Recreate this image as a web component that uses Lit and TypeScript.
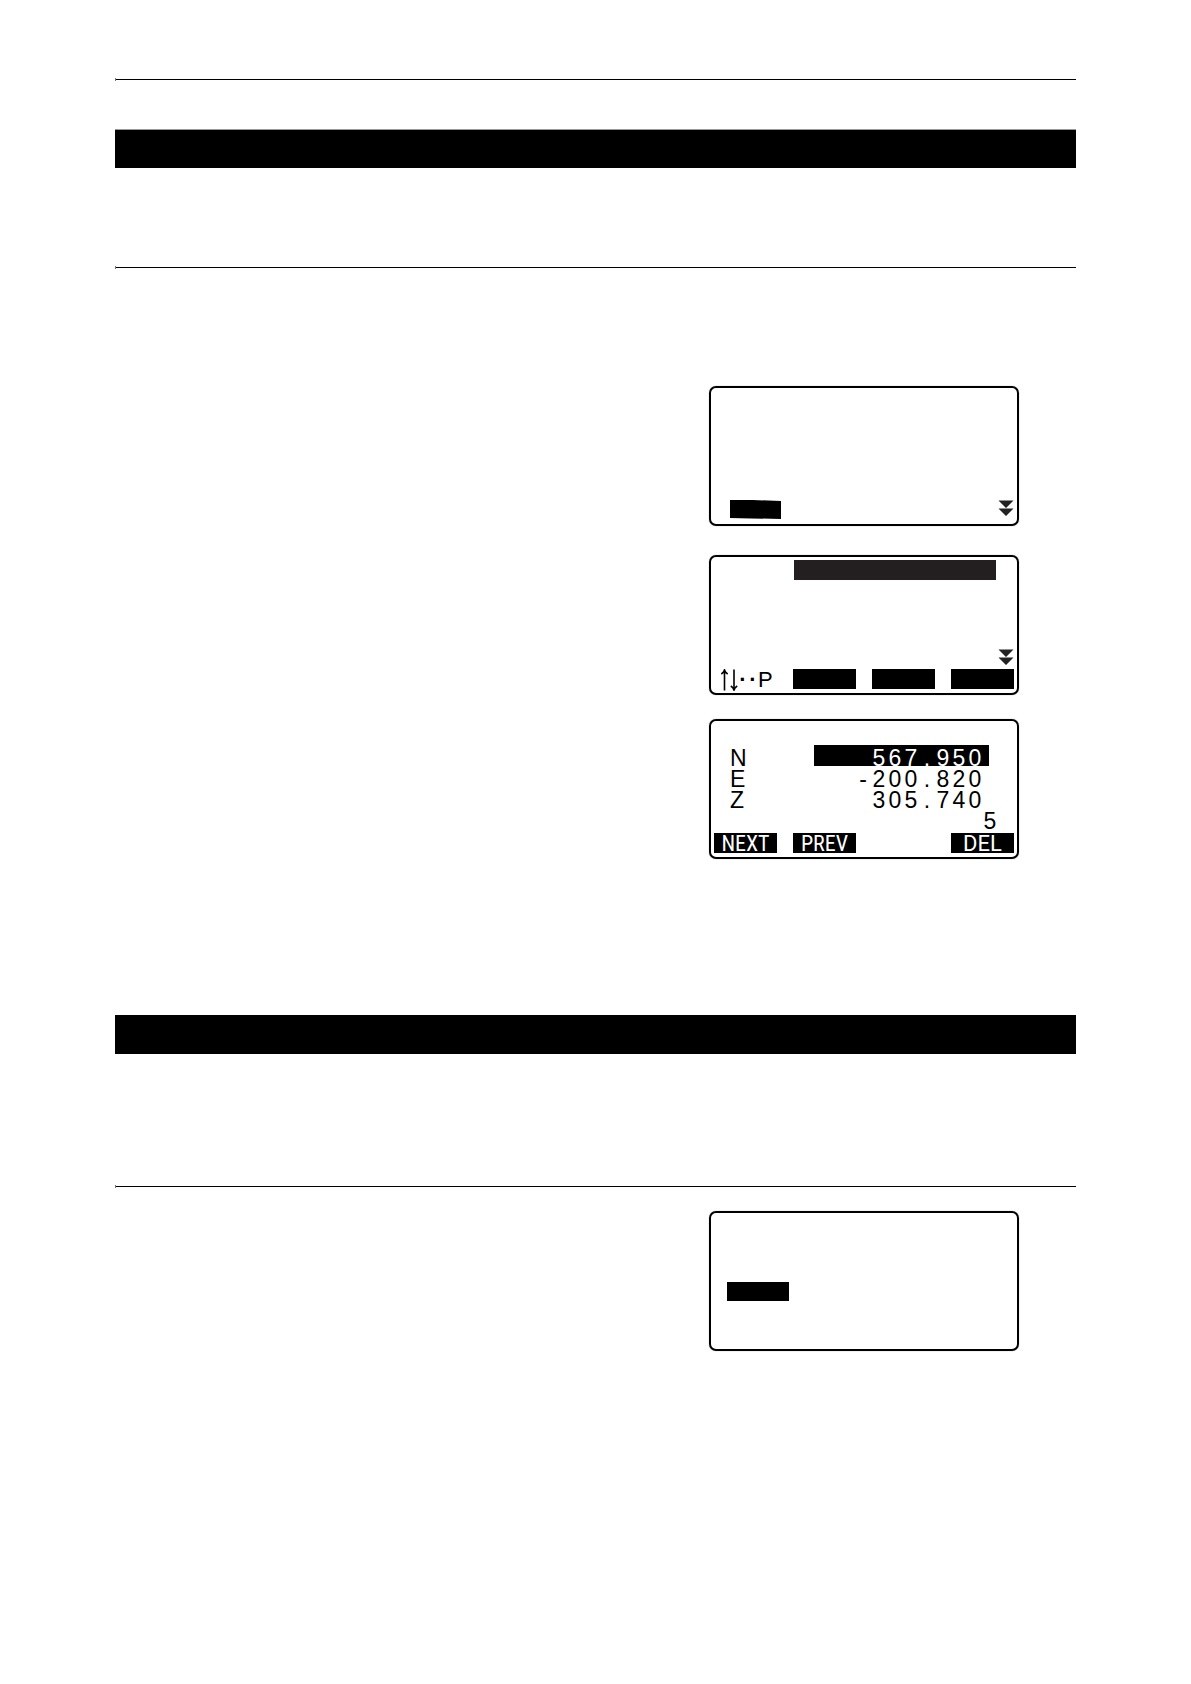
import { LitElement, html, css, svg } from "lit";
import { customElement, property } from "lit/decorators.js";

/** Text set in the fixed character cells of the instrument display. */
@customElement("lcd-text")
export class LcdText extends LitElement {
  @property() value = "";

  static styles = css`
    :host {
      display: flex;
      justify-content: flex-end;
      box-sizing: border-box;
      height: 21px;
      padding-top: 5px;
      line-height: 17px;
    }
    .cell {
      width: 16px;
      text-align: center;
    }
  `;

  render() {
    return [...this.value].map((c) => html`<span class="cell">${c}</span>`);
  }
}

/** Double triangle: more lines follow below. */
const more = html`<svg class="more" width="16" height="16" viewBox="0 0 16 16" aria-hidden="true">
  ${svg`<path d="M0.5 0.5h15L8 8zM0.5 8.5h15L8 16z" fill="#222" />`}
</svg>`;

const rows = [
  { axis: "N", value: "567.950", selected: true },
  { axis: "E", value: "-200.820", selected: false },
  { axis: "Z", value: "305.740", selected: false },
];

@customElement("app-root")
export class AppRoot extends LitElement {
  static styles = css`
    :host {
      display: block;
      min-height: 100vh;
      background: #fff;
      color: #000;
      font-family: "Liberation Sans", Arial, sans-serif;
      font-size: 23px;
    }
    * {
      box-sizing: border-box;
    }
    .page {
      padding: 79px 115px 0;
    }
    .rule {
      position: relative;
      height: 1px;
      margin: 0;
      border: 0;
      background: #000;
      overflow: visible;
    }
    .rule::before {
      content: "";
      position: absolute;
      left: 0;
      top: -1px;
      width: 1px;
      height: 3px;
      background: #777;
    }
    .bar {
      height: 39px;
      background: #000;
    }
    .bar.first {
      margin: 49px 0 99px;
      border-top: 1px solid #999;
    }
    .bar.second {
      margin: 156px 0 132px;
    }
    .screens {
      display: flex;
      flex-direction: column;
      align-items: flex-end;
      padding: 118px 57px 0 0;
    }
    .screens.single {
      padding-top: 24px;
    }
    .screen {
      display: flex;
      flex-direction: column;
      width: 310px;
      max-width: 100%;
      height: 140px;
      padding: 3px;
      border: 2px solid #000;
      border-radius: 7px;
      box-shadow: 0 0 1px #777;
    }
    .screen.menu {
      margin-bottom: 29px;
      padding: 0 3px 5px 18px;
      justify-content: flex-end;
    }
    .menu-row {
      display: flex;
      align-items: flex-start;
      justify-content: space-between;
    }
    .screen.list {
      margin-bottom: 24px;
      padding-bottom: 4px;
    }
    .heading {
      height: 20px;
      margin: 0 18px 0 80px;
      background: #231f20;
    }
    .list .more {
      margin: auto 0 4px auto;
    }
    .keys {
      display: grid;
      grid-template-columns: 63px 63px 63px 63px;
      justify-content: space-between;
      height: 20px;
    }
    .key {
      height: 20px;
      padding: 2px 0 0;
      border: 0;
      background: #000;
      color: #fff;
      font-family: "Roboto Condensed", Roboto, sans-serif;
      font-size: 22px;
      line-height: 18px;
      text-align: center;
    }
    .key.wide {
      font-family: Roboto, sans-serif;
    }
    .paging {
      display: flex;
      align-items: center;
      padding-left: 6px;
      font-size: 22px;
      line-height: 20px;
    }
    .dot {
      width: 10px;
      font-weight: bold;
      text-align: center;
    }
    .screen.coords {
      padding-top: 24px;
    }
    .table {
      margin: 0 25px 0 16px;
      border-collapse: collapse;
    }
    .table th,
    .table td {
      padding: 0;
      font-weight: normal;
      text-align: left;
    }
    .axis {
      display: block;
      height: 21px;
      padding-top: 5px;
      line-height: 17px;
    }
    .value {
      width: 175px;
    }
    .value lcd-text {
      padding-right: 6px;
    }
    .value .selected {
      background: #000;
      color: #fff;
    }
    .index {
      margin-right: 16px;
    }
    .coords .keys {
      margin-top: 4px;
    }
    .screen.choice {
      padding: 69px 16px 0;
    }
    .option {
      width: 62px;
      height: 19px;
      background: #000;
    }
  `;

  render() {
    return html`
      <main class="page">
        <hr class="rule" />
        <div class="bar first"></div>
        <hr class="rule" />
        <section class="screens">
          <div class="screen menu">
            <div class="menu-row">
              <svg width="52" height="19" viewBox="0 0 52 19" aria-hidden="true">
                <path d="M1 0H24L52 1V19L22 18.4L1 18z" />
              </svg>
              ${more}
            </div>
          </div>

          <div class="screen list">
            <div class="heading"></div>
            ${more}
            <div class="keys">
              <div class="paging">
                <svg width="18" height="22" viewBox="0 0 18 22" fill="none" stroke="#000" stroke-width="1.6" aria-hidden="true">
                  <path d="M4.5 21.500V1.500M1.300 5Q3.800 3.500 4.500 1Q5.200 3.500 7.700 5M14 0.500V20.500M10.800 17Q13.300 18.500 14 21Q14.700 18.500 17.200 17" />
                </svg>
                <span class="dot">·</span><span class="dot">·</span><span>P</span>
              </div>
              <div class="key"></div>
              <div class="key"></div>
              <div class="key"></div>
            </div>
          </div>

          <div class="screen coords">
            <table class="table">
              ${rows.map(
                (r) => html`<tr>
                  <th scope="row"><span class="axis">${r.axis}</span></th>
                  <td class="value">
                    <lcd-text class=${r.selected ? "selected" : ""} .value=${r.value}></lcd-text>
                  </td>
                </tr>`
              )}
            </table>
            <lcd-text class="index" .value=${"5"}></lcd-text>
            <div class="keys">
              <button class="key">NEXT</button>
              <button class="key">PREV</button>
              <span></span>
              <button class="key wide">DEL</button>
            </div>
          </div>
        </section>

        <div class="bar second"></div>
        <hr class="rule" />
        <section class="screens single">
          <div class="screen choice">
            <div class="option"></div>
          </div>
        </section>
      </main>
    `;
  }
}
